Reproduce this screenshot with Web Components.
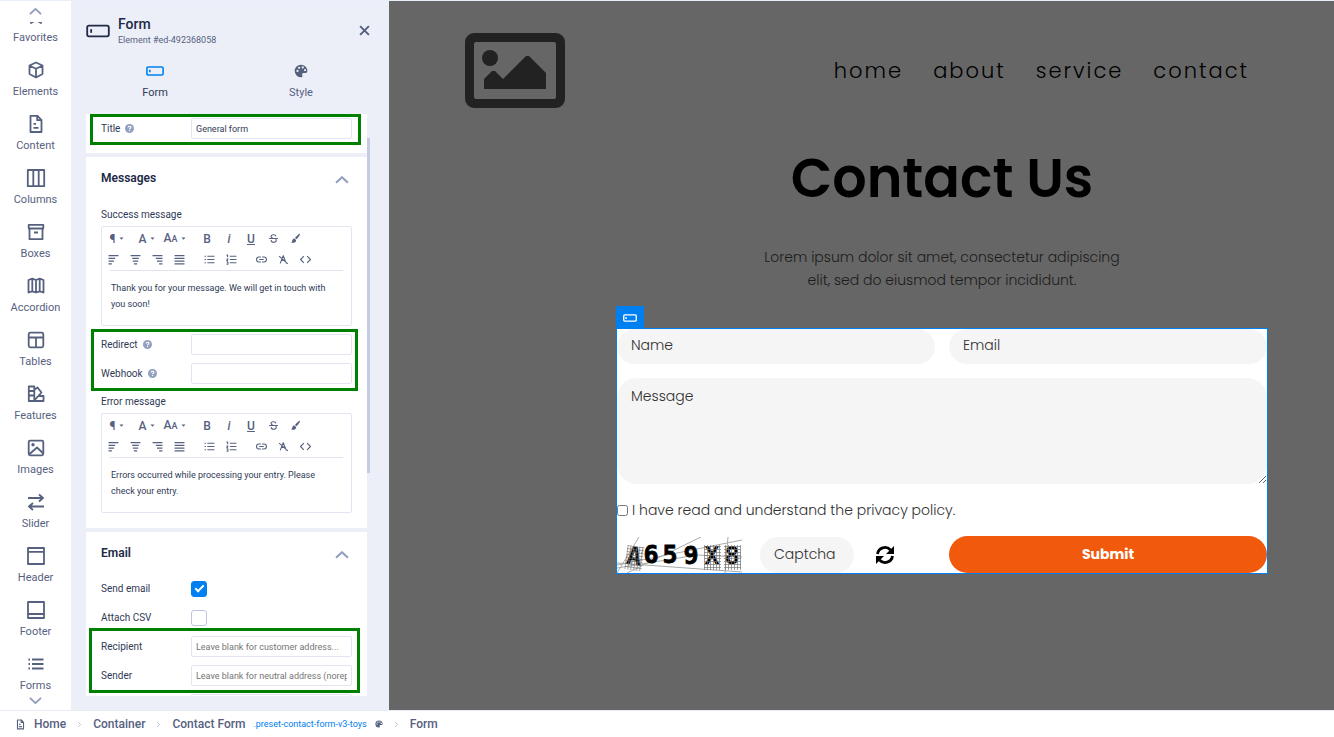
<!DOCTYPE html>
<html lang="en">
<head>
<meta charset="utf-8">
<meta name="viewport" content="width=device-width, initial-scale=1">
<title>Page editor</title>
<style>
    html, body { height: 100%; }
    body { margin: 0; font-family: Roboto, "Liberation Sans", sans-serif; }
</style>
</head>
<body>
<editor-app></editor-app>

<script>
const ICONS = {
    star: '<path d="M10 2l2.500 5.200 5.500.8-4 4 1 5-5-3-5 3 1-5-4-4 5.500-.8z"/>',
    cube: '<path d="M10 2.500l6.500 3v8.500l-6.500 3.500-6.500-3.500v-8.500zM3.700 5.700l6.300 3 6.300-3M10 8.700v8.500"/>',
    file: '<path d="M4.500 1.800h7l4 4.200v12h-11zM11.200 2v4.200h4.200M7.500 9.800h2.500M7.500 13.800h5"/>',
    columns: '<path d="M1.800 2h16.400v16.200h-16.400zM7.300 2v16M12.700 2v16"/>',
    box: '<path d="M2.700 2.800h14.600v3.700h-14.600zM3.500 6.500h13v10.700h-13zM8 10.500h4"/>',
    map: '<path d="M2.500 4l3.800-1.300 3.700 1.300 3.700-1.300 3.800 1.300v12.500l-3.800-1.200-3.700 1.200-3.700-1.200-3.800 1.200zM6.300 3v12M10 4v12.500M13.700 3v12"/>',
    table: '<rect x="2.700" y="2.700" width="14.600" height="14.600" rx="1.500"/><path d="M3 7.500h14M10 7.500v9.700"/>',
    swatch: '<path d="M2.800 2.500h5.500v14.500h-5.500zM2.800 7h5.500M2.800 11.500h5.500M8.300 5.800l3.200-2.300 4 5-7.200 7.800M12.500 12h5v5h-10"/>',
    image: '<rect x="2.700" y="2.700" width="14.600" height="14.600" rx="1.500"/><circle cx="7" cy="6.800" r=".8"/><path d="M3 16.500l8-7 6.300 6"/>',
    swap: '<path d="M2 6h15M13 2.500l4 3.500-4 3.500M18 14.500h-15M7 11l-4 3.500 4 3.500"/>',
    header: '<path d="M2 2h16v16h-16zM2 5.800h16"/>',
    footer: '<path d="M2 2h16v16h-16zM2 14h16"/>',
    list: '<path d="M6 5.500h11.500M6 10h11.500M6 14.500h11.500M2.500 5.500h1.500M2.500 10h1.500M2.500 14.500h1.500"/>',
    up: '<path d="M1.500 14l8.500-8 8.500 8"/>',
    down: '<path d="M1.500 6l8.500 8 8.500-8"/>',
    right: '<path d="M6 3l7 7-7 7"/>',
    close: '<path d="M2 2l16 16M18 2l-16 16"/>',
    field: '<rect x="1" y="5.500" width="18" height="9" rx="1.500"/><path d="M4.300 8.500v3"/>',
    palette: '<path fill="currentColor" stroke="none" fill-rule="evenodd" d="M10 1a9 9 0 1 0 0 18c2 0 2.600-1.300 1.800-3-.8-1.800 0-3.300 2-3.300h3c1.500 0 2.200-1 2.200-2.700a9 9 0 0 0-9-9zM5 11.500a1.600 1.600 0 1 1 0-3.200 1.600 1.600 0 0 1 0 3.200zM7.300 7a1.600 1.600 0 1 1 0-3.200 1.600 1.600 0 0 1 0 3.200zM12.500 6.500a1.600 1.600 0 1 1 0-3.200 1.600 1.600 0 0 1 0 3.200zM15.800 10.300a1.600 1.600 0 1 1 0-3.200 1.600 1.600 0 0 1 0 3.200z"/>',
    help: '<circle cx="10" cy="10" r="10" fill="currentColor" stroke="none"/><path stroke="#fff" d="M7 8c0-4 6-4 6-.5 0 2-3 2-3 4M10 13.500v2"/>',
    caret: '<path fill="currentColor" stroke="none" d="M2 6h16l-8 9z"/>',
    strike: '<path d="M2 10h16M14.500 6c-1-4-9-3.500-9 .5 0 2 2 3 4.500 3.500M5.500 13c.5 5 9.500 5 9.500.5 0-1-.3-1.800-1-2.500"/>',
    brush: '<path fill="currentColor" stroke="none" d="M18 1.500c1 1-1 4.500-6 10l-3-2.500c4.500-5 8-8.500 9-7.500zM8 10l3 2.500c.5 4-3.500 6-9 5 2-1 1.500-3 2.500-5 .8-1.600 2-2.500 3.500-2.500z"/>',
    left: '<path d="M1 3h18M1 8h12M1 13h10M1 18h6"/>',
    center: '<path d="M1 3h18M4 8h12M5 13h10M7 18h6"/>',
    end: '<path d="M1 3h18M7 8h12M9 13h10M13 18h6"/>',
    justify: '<path d="M1 3h18M1 8h18M1 13h18M1 18h18"/>',
    bullets: '<path d="M6 4h13M6 10h13M6 16h13M1 4h2.500M1 10h2.500M1 16h2.500"/>',
    numbers: '<path d="M7 4h12M7 10h12M7 16h12M1 2h2v4M1 9h2.500l-2 3h2M1 14.500h2.500v4h-2.500"/>',
    link: '<path d="M9 5.500h-3.500a4.500 4.500 0 0 0 0 9h3.500M11 5.500h3.500a4.500 4.500 0 0 1 0 9h-3.500M6 10h8"/>',
    clear: '<path d="M4 17l5.500-14 5.500 14M6 11.500h7M2 4l16 14"/>',
    code: '<path d="M7 4l-6 6 6 6M13 4l6 6-6 6"/>',
    refresh: '<path d="M2.500 9a7.500 7.500 0 0 1 13-4M17.500 11a7.500 7.500 0 0 1-13 4"/><path fill="currentColor" stroke="none" d="M19 1v8h-8zM1 19v-8h8z"/>'
}

const escapeText = text => text.replace(/&/g, "&amp;").replace(/</g, "&lt;")

class AppIcon extends HTMLElement {
    connectedCallback() {
        if (!this.shadowRoot) this.attachShadow({ mode: "open" })
        this.shadowRoot.innerHTML = `
            <style>
                :host { display: inline-block; flex: none; width: var(--icon-size, 20px); height: var(--icon-size, 20px); }
                svg { display: block; width: 100%; height: 100%; fill: none; stroke: currentColor; stroke-width: var(--icon-stroke, 1.800); stroke-linejoin: round; }
            </style>
            <svg viewBox="0 0 20 20" aria-hidden="true">${ICONS[this.getAttribute("name")] || ""}</svg>
        `
    }
}
customElements.define("app-icon", AppIcon)

const RAIL_ITEMS = [
    ["star", "Favorites"], ["cube", "Elements"], ["file", "Content"], ["columns", "Columns"],
    ["box", "Boxes"], ["map", "Accordion"], ["table", "Tables"], ["swatch", "Features"],
    ["image", "Images"], ["swap", "Slider"], ["header", "Header"], ["footer", "Footer"], ["list", "Forms"]
]

class ElementRail extends HTMLElement {
    connectedCallback() {
        this.attachShadow({ mode: "open" })
        this.shadowRoot.innerHTML = `
            <style>
                :host { display: flex; flex-direction: column; flex: none; width: 71px; min-height: 0; background: #fff; color: #56617f; }
                button { border: 0; padding: 0; background: none; color: inherit; font: 11px/16px Roboto, sans-serif; }
                .step { flex: none; height: 21px; color: #939fbd; --icon-size: 13px; --icon-stroke: 3; line-height: 0; }
                .step:last-child { height: 16px; padding-bottom: 4px; }
                /* the list is shown scrolled to its end */
                ul { flex: 1; display: flex; flex-direction: column; justify-content: flex-end; min-height: 0; margin: 0; padding: 0; list-style: none; overflow: hidden; }
                li { flex: none; }
                li button { display: flex; flex-direction: column; align-items: center; justify-content: flex-start; gap: 4px; width: 100%; height: 54px; padding-top: 6px; }
                li:last-child button { height: 46px; }
            </style>
            <button class="step" aria-label="Scroll up"><app-icon name="up"></app-icon></button>
            <ul>${RAIL_ITEMS.map(([icon, label]) => `<li><button><app-icon name="${icon}"></app-icon>${label}</button></li>`).join("")}</ul>
            <button class="step" aria-label="Scroll down"><app-icon name="down"></app-icon></button>
        `
    }
}
customElements.define("element-rail", ElementRail)

// Frame that draws attention to the rows slotted into it
class MarkFrame extends HTMLElement {
    connectedCallback() {
        this.attachShadow({ mode: "open" })
        this.shadowRoot.innerHTML = `
            <style>
                :host { display: block; position: relative; }
                :host::after { content: ""; position: absolute; inset: var(--frame-inset, 0 -8px); border: 3px solid #008000; pointer-events: none; }
            </style>
            <slot></slot>
        `
    }
}
customElements.define("mark-frame", MarkFrame)

class SettingCard extends HTMLElement {
    connectedCallback() {
        this.attachShadow({ mode: "open" })
        const heading = this.getAttribute("heading")
        this.shadowRoot.innerHTML = `
            <style>
                :host { display: block; padding: 0 15px 15px; background: #fff; }
                :host(:not([heading])) { padding-bottom: 10px; }
                header { display: flex; align-items: center; justify-content: space-between; height: 42px; padding-right: 3px; color: #939fbd; }
                h2 { margin: 0; font-size: 12px; line-height: 16px; font-weight: 600; color: #202945; }
                button { border: 0; padding: 3px 0 0; background: none; color: inherit; line-height: 0; --icon-size: 14px; --icon-stroke: 3; }
            </style>
            ${heading ? `<header><h2>${heading}</h2><button aria-label="Collapse ${heading}"><app-icon name="up"></app-icon></button></header>` : ""}
            <slot></slot>
        `
    }
}
customElements.define("setting-card", SettingCard)

class FieldRow extends HTMLElement {
    connectedCallback() {
        this.attachShadow({ mode: "open" })
        const type = this.getAttribute("type") || "text"
        const value = this.getAttribute("value") || ""
        const hint = this.getAttribute("hint") || ""
        this.shadowRoot.innerHTML = `
            <style>
                :host { display: flex; align-items: center; height: 29px; font-size: 10px; color: #303a56; }
                label { display: flex; align-items: center; gap: 5px; flex: none; width: 90px; line-height: 16px; }
                app-icon { color: #93a0bf; --icon-size: 9px; --icon-stroke: 2.500; }
                input { box-sizing: border-box; margin: 0; border: 1px solid #e3e6f2; border-radius: 2px; background: #fff; }
                input[type=text] { flex: 1; min-width: 0; height: 21px; padding: 0 4px; font: 9px/16px Roboto, sans-serif; color: #303a56; outline: 0; }
                input::placeholder { color: #757575; opacity: 1; }
                input[type=checkbox] { appearance: none; width: 16px; height: 16px; border-color: #bdc6de; border-radius: 3px; display: grid; place-items: center; }
                input:checked { background: #0080f0; border-color: #0080f0; }
                input:checked::after { content: ""; width: 7px; height: 3px; margin-bottom: 3px; border: solid #fff; border-width: 0 0 2px 2px; rotate: -45deg; }
            </style>
            <label for="control">${this.getAttribute("label")}${this.hasAttribute("help") ? '<app-icon name="help"></app-icon>' : ""}</label>
            <input id="control" type="${type}" ${value ? `value="${value}"` : ""} ${hint ? `placeholder="${hint}"` : ""} ${this.hasAttribute("checked") ? "checked" : ""}>
        `
    }
}
customElements.define("field-row", FieldRow)

class RichEditor extends HTMLElement {
    tools(names) {
        return names.map(name => `<button aria-label="${name}"><app-icon name="${name}"></app-icon></button>`).join("")
    }

    connectedCallback() {
        this.attachShadow({ mode: "open" })
        this.shadowRoot.innerHTML = `
            <style>
                :host { display: block; font-size: 10px; line-height: 16px; color: #303a56; }
                .label { margin-bottom: 3px; }
                .box { box-sizing: border-box; min-height: 100px; border: 1px solid #e3e6f2; border-radius: 2px; }
                .bar { display: flex; align-items: center; height: 21px; color: #56617f; }
                .bars { padding-top: 1px; }
                .group { display: flex; margin-right: 8px; }
                button { display: flex; align-items: center; justify-content: center; gap: 4px; width: 22px; height: 21px; padding: 0; border: 0; background: none; color: inherit; font: 500 12px/16px Roboto, sans-serif; --icon-size: 11px; --icon-stroke: 2; }
                .menu { width: 30px; --icon-size: 5px; }
                .menu.size { width: 26px; }
                small { font-size: 9px; }
                .size span { display: flex; align-items: baseline; }
                .text { margin: 0 8px; padding: 9px 10px 9px 1px; border-top: 1px solid #dfe3ee; font-size: 9px; outline: 0; }
            </style>
            <div class="label" id="label">${this.getAttribute("label")}</div>
            <div class="box">
                <div class="bars">
                    <div class="bar">
                        <div class="group">
                            <button class="menu">¶<app-icon name="caret"></app-icon></button>
                            <button class="menu">A<app-icon name="caret"></app-icon></button>
                            <button class="menu size"><span>A<small>A</small></span><app-icon name="caret"></app-icon></button>
                        </div>
                        <div class="group">
                            <button>B</button><button><i>i</i></button><button><u>U</u></button>${this.tools(["strike", "brush"])}
                        </div>
                    </div>
                    <div class="bar">
                        <div class="group">${this.tools(["left", "center", "end", "justify"])}</div>
                        <div class="group">${this.tools(["bullets", "numbers"])}</div>
                        <div class="group">${this.tools(["link", "clear", "code"])}</div>
                    </div>
                </div>
                <div class="text" role="textbox" contenteditable="true" aria-labelledby="label" spellcheck="false">${escapeText(this.getAttribute("text"))}</div>
            </div>
        `
    }
}
customElements.define("rich-editor", RichEditor)

class SettingsPanel extends HTMLElement {
    connectedCallback() {
        this.attachShadow({ mode: "open" })
        this.shadowRoot.innerHTML = `
            <style>
                :host { box-sizing: border-box; display: flex; flex-direction: column; flex: none; width: 318px; min-height: 0; padding: 0 19px 14px 15px; background: #eceff8; color: #56617f; }
                header { display: flex; align-items: center; gap: 8px; height: 59px; color: #202945; --icon-size: 24px; --icon-stroke: 1.500; }
                .name { flex: 1; }
                h1 { margin: 0; font-size: 14px; line-height: 18px; font-weight: 500; }
                p { margin: 0; font-size: 9px; line-height: 14px; color: #56617f; }
                button { border: 0; padding: 0; background: none; color: inherit; }
                .close { line-height: 0; color: #56617f; --icon-size: 11px; --icon-stroke: 3.500; }
                nav { display: flex; height: 54px; margin: 0 -4px; }
                nav button { flex: 1; display: flex; flex-direction: column; align-items: center; gap: 5px; padding-top: 2px; font: 11px/16px Roboto, sans-serif; --icon-size: 18px; }
                nav app-icon { color: #56617f; }
                nav .active { color: #303a56; }
                nav .active app-icon { color: #0080f0; }
                nav button:last-child { --icon-size: 14px; padding-top: 4px; gap: 7px; }
                .scroll { flex: 1; min-height: 0; display: flex; }
                .cards { flex: 1; min-width: 0; display: flex; flex-direction: column; gap: 4px; overflow: hidden; }
                .cards > * { flex: none; }
                .track { width: 3px; padding-top: 24px; }
                .thumb { height: 60%; background: #c3cce2; }
                rich-editor { margin-top: 8px; }
                .middle-mark + rich-editor { margin-top: 6px; }
                .first-mark { --frame-inset: 0 -9px -2px -11px; }
                .middle-mark { margin-top: 4px; --frame-inset: -1px -6px -3px -10px; }
                .last-mark { --frame-inset: -4px -8px -3px -12px; }
            </style>
            <header>
                <app-icon name="field"></app-icon>
                <div class="name"><h1>Form</h1><p>Element #ed-492368058</p></div>
                <button class="close" aria-label="Close"><app-icon name="close"></app-icon></button>
            </header>
            <nav>
                <button class="active"><app-icon name="field"></app-icon>Form</button>
                <button><app-icon name="palette"></app-icon>Style</button>
            </nav>
            <div class="scroll">
                <div class="cards">
                    <setting-card>
                        <mark-frame class="first-mark"><field-row label="Title" value="General form" help></field-row></mark-frame>
                    </setting-card>
                    <setting-card heading="Messages">
                        <rich-editor label="Success message" text="Thank you for your message. We will get in touch with you soon!"></rich-editor>
                        <mark-frame class="middle-mark">
                            <field-row label="Redirect" help></field-row>
                            <field-row label="Webhook" help></field-row>
                        </mark-frame>
                        <rich-editor label="Error message" text="Errors occurred while processing your entry. Please check your entry."></rich-editor>
                    </setting-card>
                    <setting-card heading="Email">
                        <field-row type="checkbox" label="Send email" checked></field-row>
                        <field-row type="checkbox" label="Attach CSV"></field-row>
                        <mark-frame class="last-mark">
                            <field-row label="Recipient" hint="Leave blank for customer address..."></field-row>
                            <field-row label="Sender" hint="Leave blank for neutral address (noreply)"></field-row>
                        </mark-frame>
                        <field-row label=""></field-row>
                    </setting-card>
                </div>
                <div class="track"><div class="thumb"></div></div>
            </div>
        `
    }
}
customElements.define("settings-panel", SettingsPanel)

class CaptchaImage extends HTMLElement {
    connectedCallback() {
        this.attachShadow({ mode: "open" })
        this.shadowRoot.innerHTML = `
            <style>
                :host { display: block; flex: none; width: 125px; height: 36px; }
                svg { display: block; }
                text { font: bold 25px "DejaVu Sans Mono", monospace; text-anchor: middle; }
            </style>
            <svg width="125" height="36" viewBox="0 0 125 36" role="img" aria-label="Captcha">
                <defs>
                    <pattern id="grid" width="3" height="3" patternUnits="userSpaceOnUse"><path d="M0 .5h3M.5 0v3" stroke="#777" stroke-width=".7"/></pattern>
                </defs>
                <path d="M0 36L22 0M10 36L84 0M0 26l125 9M0 28L125 3M108 36l3-36M0 31l80-13 45 2" fill="none" stroke="#aaa" stroke-width="1"/>
                <g stroke="#000" stroke-width=".8"><text x="34" y="26">6</text><text x="53" y="26">5</text><text x="74" y="27">9</text></g>
                <g transform="rotate(8 17 20)"><text x="17" y="28">A</text><rect x="9" y="9" width="17" height="24" fill="url(#grid)"/></g>
                <text x="95" y="27">X</text><rect x="87" y="8" width="17" height="25" fill="url(#grid)"/>
                <text x="115" y="27">8</text><rect x="107" y="8" width="17" height="25" fill="url(#grid)"/>
            </svg>
        `
    }
}
customElements.define("captcha-image", CaptchaImage)

class ContactForm extends HTMLElement {
    connectedCallback() {
        this.attachShadow({ mode: "open" })
        this.shadowRoot.innerHTML = `
            <style>
                :host { display: block; position: relative; border: 1px solid #0080f0; background: #fff; color: #303030; }
                .tag { position: absolute; left: -1px; bottom: 100%; display: grid; place-items: center; width: 28px; height: 23px; background: #0080f0; color: #fff; --icon-size: 14px; --icon-stroke: 2; }
                form { display: grid; grid-template-columns: 1fr 1fr; gap: 14px; }
                input, textarea, button { box-sizing: border-box; min-width: 0; margin: 0; border: 0; font: inherit; color: inherit; outline: 0; }
                input, textarea { background: #f5f5f5; border-radius: 18px; padding: 0 14px; }
                input::placeholder, textarea::placeholder { color: #303030; opacity: 1; }
                .line { height: 35px; padding-bottom: 2px; }
                textarea { grid-column: 1 / -1; height: 106px; padding: 7px 14px; border-radius: 20px; resize: vertical; }
                .policy { grid-column: 1 / -1; display: flex; align-items: center; gap: 4px; height: 24px; }
                .policy input { width: 11px; height: 13px; }
                .captcha { display: flex; align-items: center; height: 37px; }
                .captcha input { width: 94px; height: 36px; margin: 0 21px 0 18px; }
                .captcha button { padding: 0; background: none; line-height: 0; color: #000; --icon-stroke: 2.800; }
                .submit { background: #f1590d; color: #fff; font-weight: 700; border-radius: 19px; }
            </style>
            <div class="tag"><app-icon name="field"></app-icon></div>
            <form>
                <input class="line" type="text" placeholder="Name" aria-label="Name">
                <input class="line" type="email" placeholder="Email" aria-label="Email">
                <textarea placeholder="Message" aria-label="Message"></textarea>
                <label class="policy"><input type="checkbox">I have read and understand the privacy policy.</label>
                <div class="captcha">
                    <captcha-image></captcha-image>
                    <input type="text" placeholder="Captcha" aria-label="Captcha">
                    <button type="button" aria-label="New captcha"><app-icon name="refresh"></app-icon></button>
                </div>
                <button class="submit" type="button">Submit</button>
            </form>
        `
    }
}
customElements.define("contact-form", ContactForm)

class SitePreview extends HTMLElement {
    connectedCallback() {
        this.attachShadow({ mode: "open" })
        this.shadowRoot.innerHTML = `
            <style>
                :host { display: block; flex: 1; min-width: 0; overflow: hidden; padding: 32px 66px 0 76px; background: #666; color: #000; font: 300 14px/23px Poppins, Inter, sans-serif; }
                header { display: flex; align-items: center; justify-content: space-between; padding-right: 19px; }
                .logo { display: block; width: 100px; height: 75px; }
                nav { display: flex; gap: 30px; font-size: 21px; line-height: 32px; letter-spacing: 2px; }
                a { color: inherit; text-decoration: none; }
                main { margin-left: 151px; text-align: center; }
                h1 { margin: 37px 0 34px; font-size: 54px; line-height: 67px; font-weight: 600; }
                p { max-width: 370px; margin: 0 auto 36px; color: #1c1c1c; }
                contact-form { text-align: left; }
            </style>
            <header>
                <svg class="logo" viewBox="0 0 100 75" fill="#222" role="img" aria-label="Logo">
                    <path fill-rule="evenodd" d="M9 0h82a9 9 0 0 1 9 9v57a9 9 0 0 1-9 9h-82a9 9 0 0 1-9-9v-57a9 9 0 0 1 9-9zM11 9q-2 0-2 2v53q0 2 2 2h78q2 0 2-2v-53q0-2-2-2z"/>
                    <circle cx="25" cy="25" r="8"/>
                    <path d="M19 56v-10l8-8h3l8 8 23-23h3l17 17v16z"/>
                </svg>
                <nav><a href="#home">home</a><a href="#about">about</a><a href="#service">service</a><a href="#contact">contact</a></nav>
            </header>
            <main>
                <h1>Contact Us</h1>
                <p>Lorem ipsum dolor sit amet, consectetur adipiscing elit, sed do eiusmod tempor incididunt.</p>
                <contact-form></contact-form>
            </main>
        `
    }
}
customElements.define("site-preview", SitePreview)

class CrumbBar extends HTMLElement {
    connectedCallback() {
        this.attachShadow({ mode: "open" })
        this.shadowRoot.innerHTML = `
            <style>
                :host { box-sizing: border-box; display: block; flex: none; height: 27px; padding: 0 15px; border-top: 1px solid #e8ebf3; background: #fff; color: #56617f; font-size: 12px; font-weight: 500; line-height: 26px; }
                nav { display: flex; align-items: center; gap: 10px; }
                a { display: flex; align-items: center; gap: 8px; color: inherit; text-decoration: none; --icon-size: 11px; --icon-stroke: 2; }
                small { font-size: 9px; font-weight: 400; color: #0080f0; }
                .tool { --icon-size: 8px; }
                nav > app-icon { --icon-size: 7px; --icon-stroke: 2; color: #a3adc6; }
            </style>
            <nav aria-label="Breadcrumb">
                <a href="#home"><app-icon name="file"></app-icon>Home</a><app-icon name="right"></app-icon>
                <a href="#container">Container</a><app-icon name="right"></app-icon>
                <a href="#contact-form" class="tool">Contact Form <small>.preset-contact-form-v3-toys</small><app-icon name="palette"></app-icon></a><app-icon name="right"></app-icon>
                <a href="#form">Form</a>
            </nav>
        `
    }
}
customElements.define("crumb-bar", CrumbBar)

class EditorApp extends HTMLElement {
    connectedCallback() {
        this.attachShadow({ mode: "open" })
        this.shadowRoot.innerHTML = `
            <style>
                :host { box-sizing: border-box; display: flex; flex-direction: column; height: 100vh; border-top: 1px solid #e9eff8; }
                .work { flex: 1; min-height: 0; display: flex; background: #eceff8; }
            </style>
            <div class="work">
                <element-rail></element-rail>
                <settings-panel></settings-panel>
                <site-preview></site-preview>
            </div>
            <crumb-bar></crumb-bar>
        `
    }
}
customElements.define("editor-app", EditorApp)
</script>
</body>
</html>
